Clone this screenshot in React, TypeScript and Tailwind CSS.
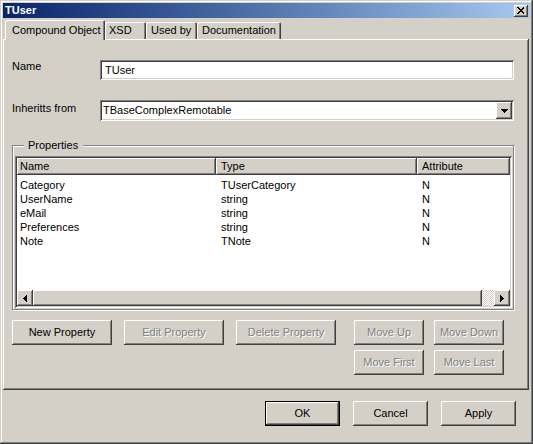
import React from "react";

type Prop = { name: string; type: string; attr: string };

const props: Prop[] = [
  { name: "Category", type: "TUserCategory", attr: "N" },
  { name: "UserName", type: "string", attr: "N" },
  { name: "eMail", type: "string", attr: "N" },
  { name: "Preferences", type: "string", attr: "N" },
  { name: "Note", type: "TNote", attr: "N" },
];

// classic 3d bevels
const raised =
  "bg-[#d4d0c8] shadow-[inset_-1px_-1px_0_#404040,inset_1px_1px_0_#ffffff,inset_-2px_-2px_0_#808080]";
const sunken =
  "bg-white shadow-[inset_1px_1px_0_#808080,inset_-1px_-1px_0_#ffffff,inset_2px_2px_0_#404040,inset_-2px_-2px_0_#d4d0c8]";

function Btn({ label, w, disabled, def }: { label: string; w: string; disabled?: boolean; def?: boolean }) {
  return (
    <button
      className={`${w} h-[25px] flex items-center justify-center ${raised} ${
        disabled ? "text-[#808080] [text-shadow:1px_1px_0_#ffffff]" : "text-black"
      } ${def ? "border border-black" : ""}`}
    >
      {label}
    </button>
  );
}

function Arrow({ dir }: { dir: "left" | "right" | "down" }) {
  if (dir === "down")
    return (
      <svg width="7" height="4" shapeRendering="crispEdges">
        <polygon points="0,0 7,0 3.5,4" fill="#000" />
      </svg>
    );
  return (
    <svg width="4" height="7" shapeRendering="crispEdges">
      {dir === "left" ? (
        <polygon points="4,0 4,7 0,3.5" fill="#000" />
      ) : (
        <polygon points="0,0 0,7 4,3.5" fill="#000" />
      )}
    </svg>
  );
}

export default function App() {
  return (
    <div className="w-[533px] h-[444px] bg-[#d4d0c8] p-[3px] flex flex-col font-['Liberation_Sans',Arial,sans-serif] text-[11px] leading-[13px] text-black shadow-[inset_-1px_-1px_0_#404040,inset_1px_1px_0_#d4d0c8,inset_-2px_-2px_0_#808080,inset_2px_2px_0_#ffffff]">
      {/* TITLE */}
      <div className="h-[15px] flex items-center justify-between bg-linear-to-r from-[#0a246a] to-[#a6caf0] pl-[2px] pr-[2px]">
        <span className="font-bold text-white">TUser</span>
        <div className={`w-[14px] h-[12px] flex items-center justify-center ${raised}`}>
          <svg width="8" height="7" shapeRendering="crispEdges">
            <path d="M0.5 0.5 L7.5 6.5 M7.5 0.5 L0.5 6.5" stroke="#000" strokeWidth="1.4" />
          </svg>
        </div>
      </div>

      {/* TABS */}
      <div className="mt-[2px] h-[19px] flex items-end">
        <div className="relative z-10 ml-[2px] -mb-[1px] w-[100px] h-[20px] pl-[7px] flex items-center bg-[#d4d0c8] rounded-t-[2px] shadow-[inset_1px_1px_0_#ffffff,inset_-1px_0_0_#404040,inset_-2px_0_0_#808080]">
          Compound Object
        </div>
        <div className="w-[41px] h-[17px] pl-[4px] flex items-center rounded-t-[2px] shadow-[inset_1px_1px_0_#ffffff,inset_-1px_0_0_#404040,inset_-2px_0_0_#808080]">
          XSD
        </div>
        <div className="w-[51px] h-[17px] pl-[5px] flex items-center rounded-t-[2px] shadow-[inset_1px_1px_0_#ffffff,inset_-1px_0_0_#404040,inset_-2px_0_0_#808080]">
          Used by
        </div>
        <div className="w-[84px] h-[17px] pl-[5px] flex items-center rounded-t-[2px] shadow-[inset_1px_1px_0_#ffffff,inset_-1px_0_0_#404040,inset_-2px_0_0_#808080]">
          Documentation
        </div>
      </div>

      {/* PANEL */}
      <div className="flex-1 mr-[1px] pl-[9px] pt-[21px] flex flex-col shadow-[inset_-1px_-1px_0_#404040,inset_1px_1px_0_#ffffff,inset_-2px_-2px_0_#808080]">
        <div className="flex items-start">
          <span className="w-[88px]">Name</span>
          <div className={`w-[414px] h-[20px] pl-[5px] flex items-center ${sunken}`}>TUser</div>
        </div>

        <div className="mt-[20px] flex items-start">
          <span className="w-[88px] pt-[2px]">Inheritts from</span>
          <div className={`w-[414px] h-[21px] pl-[3px] pr-[2px] flex items-center justify-between ${sunken}`}>
            <span>TBaseComplexRemotable</span>
            <div className={`w-[16px] h-[17px] flex items-center justify-center ${raised}`}>
              <Arrow dir="down" />
            </div>
          </div>
        </div>

        {/* PROPERTIES */}
        <fieldset className="mt-[18px] w-[502px] pl-[2px] pr-[1px] pb-[1px] border border-[#808080] shadow-[1px_1px_0_#ffffff,inset_1px_1px_0_#ffffff]">
          <legend className="ml-[9px] px-[4px] pr-[5px] bg-[#d4d0c8] leading-[13px]">Properties</legend>
          <div className={`mt-[4px] h-[152px] p-[2px] flex flex-col ${sunken}`}>
            <div className="h-[17px] flex">
              <div className={`w-[199px] pl-[3px] flex items-center ${raised}`}>Name</div>
              <div className={`w-[201px] pl-[5px] flex items-center ${raised}`}>Type</div>
              <div className={`flex-1 pl-[5px] flex items-center ${raised}`}>Attribute</div>
            </div>
            <div className="flex-1 pt-[3px]">
              {props.map((p) => (
                <div key={p.name} className="h-[14px] flex items-center">
                  <span className="w-[199px] pl-[3px]">{p.name}</span>
                  <span className="w-[201px] pl-[5px]">{p.type}</span>
                  <span className="pl-[5px]">{p.attr}</span>
                </div>
              ))}
            </div>
            <div className="h-[16px] flex">
              <div className={`w-[16px] flex items-center justify-center ${raised}`}>
                <Arrow dir="left" />
              </div>
              <div className={`flex-1 ${raised}`} />
              <div className="w-[12px] bg-[image:repeating-conic-gradient(#ffffff_0_25%,#d4d0c8_0_50%)] bg-[length:2px_2px]" />
              <div className={`w-[16px] flex items-center justify-center ${raised}`}>
                <Arrow dir="right" />
              </div>
            </div>
          </div>
        </fieldset>

        {/* BUTTONS */}
        <div className="mt-[10px] flex items-start">
          <Btn label="New Property" w="w-[100px]" />
          <div className="ml-[12px]">
            <Btn label="Edit Property" w="w-[100px]" disabled />
          </div>
          <div className="ml-[12px]">
            <Btn label="Delete Property" w="w-[100px]" disabled />
          </div>
          <div className="ml-[18px] grid grid-cols-2 gap-x-[10px] gap-y-[5px]">
            <Btn label="Move Up" w="w-[70px]" disabled />
            <Btn label="Move Down" w="w-[70px]" disabled />
            <Btn label="Move First" w="w-[70px]" disabled />
            <Btn label="Move Last" w="w-[70px]" disabled />
          </div>
        </div>
      </div>

      {/* FOOTER */}
      <div className="h-[51px] pt-[11px] pr-[14px] flex justify-end items-start gap-[13px]">
        <Btn label="OK" w="w-[75px]" def />
        <Btn label="Cancel" w="w-[75px]" />
        <Btn label="Apply" w="w-[75px]" />
      </div>
    </div>
  );
}
